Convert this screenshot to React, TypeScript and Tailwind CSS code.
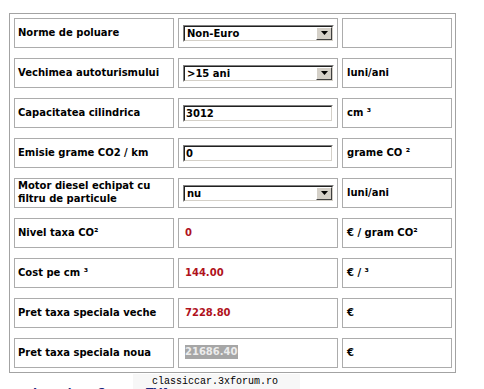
import React from 'react';

type Row = {
  label: React.ReactNode;
  kind: 'select' | 'input' | 'value' | 'selected';
  value: string;
  unit: string;
};

const rows: Row[] = [
  { label: 'Norme de poluare', kind: 'select', value: 'Non-Euro', unit: '' },
  { label: 'Vechimea autoturismului', kind: 'select', value: '>15 ani', unit: 'luni/ani' },
  { label: 'Capacitatea cilindrica', kind: 'input', value: '3012', unit: 'cm ³' },
  { label: 'Emisie grame CO2 / km', kind: 'input', value: '0', unit: 'grame CO ²' },
  {
    label: (
      <>
        Motor diesel echipat cu
        <br />
        filtru de particule
      </>
    ),
    kind: 'select',
    value: 'nu',
    unit: 'luni/ani',
  },
  { label: 'Nivel taxa CO²', kind: 'value', value: '0', unit: '€ / gram CO²' },
  { label: 'Cost pe cm ³', kind: 'value', value: '144.00', unit: '€ / ³' },
  { label: 'Pret taxa speciala veche', kind: 'value', value: '7228.80', unit: '€' },
  { label: 'Pret taxa speciala noua', kind: 'selected', value: '21686.40', unit: '€' },
];

function Sunken({ children, width }: { children: React.ReactNode; width: string }) {
  // classic windows inset box: two 1px borders
  return (
    <div className={`${width} h-[17px] border border-t-[#808080] border-l-[#808080] border-b-white border-r-white`}>
      <div className="h-full w-full border border-t-[#202020] border-l-[#202020] border-b-[#d4d0c8] border-r-[#d4d0c8] bg-white flex items-center">
        {children}
      </div>
    </div>
  );
}

function Select({ value }: { value: string }) {
  return (
    <Sunken width="w-[151px]">
      <span className="flex-1 pl-[2px] leading-[13px]">{value}</span>
      <div className="w-[16px] h-[13px] bg-[#d4d0c8] border border-t-white border-l-white border-b-[#404040] border-r-[#404040] flex items-center justify-center">
        <svg width="7" height="4" viewBox="0 0 7 4">
          <path d="M0 0h7L3.5 4z" fill="#000" />
        </svg>
      </div>
    </Sunken>
  );
}

function Field({ value }: { value: string }) {
  return (
    <Sunken width="w-[150px]">
      <span className="pl-[1px] leading-[13px]">{value}</span>
    </Sunken>
  );
}

export default function App() {
  return (
    <div className="min-h-[389px] bg-white text-black text-[10px] font-bold font-['DejaVu_Sans',sans-serif] pt-[13px] pl-[9px] overflow-hidden">
      <div className="w-[447px] border border-[#a3a3a3] pt-[4px] pb-[4px] pl-[4px] pr-[3px] grid grid-cols-[160px_160px_110px] gap-x-[4px] gap-y-[10px]">
        {rows.map((r, i) => (
          <React.Fragment key={i}>
            <div className="h-[30px] border border-[#acacac] flex items-center px-[3px] pb-[2px] leading-[13px]">
              <span>{r.label}</span>
            </div>
            <div className="h-[30px] border border-[#acacac] flex items-center pl-[4px]">
              {r.kind === 'select' && <Select value={r.value} />}
              {r.kind === 'input' && <Field value={r.value} />}
              {r.kind === 'value' && <span className="pl-[2px] pb-[2px] text-[#b0121c]">{r.value}</span>}
              {r.kind === 'selected' && (
                <span className="ml-[2px] mb-[2px] bg-[#a6a6a6] text-[#ececec] leading-[14px]">{r.value}</span>
              )}
            </div>
            <div className="h-[30px] border border-[#acacac] flex items-center pl-[4px] pb-[2px]">
              <span>{r.unit}</span>
            </div>
          </React.Fragment>
        ))}
      </div>

      <div className="relative h-[20px]">
        <div className="absolute left-[124px] top-[1px] w-[167px] h-[19px] bg-[#f7f7f7]" />
        <div className="absolute left-[143px] top-[3px] font-['Liberation_Mono',monospace] font-normal text-[10px] leading-[12px]">
          classiccar.3xforum.ro
        </div>
        <div className="absolute left-[24px] top-[13px] flex gap-[26px] text-[#1c2a80] text-[11px] leading-[13px]">
          <span>Inapoi</span>
          <span>Sus</span>
          <span>TVA</span>
        </div>
      </div>
    </div>
  );
}
